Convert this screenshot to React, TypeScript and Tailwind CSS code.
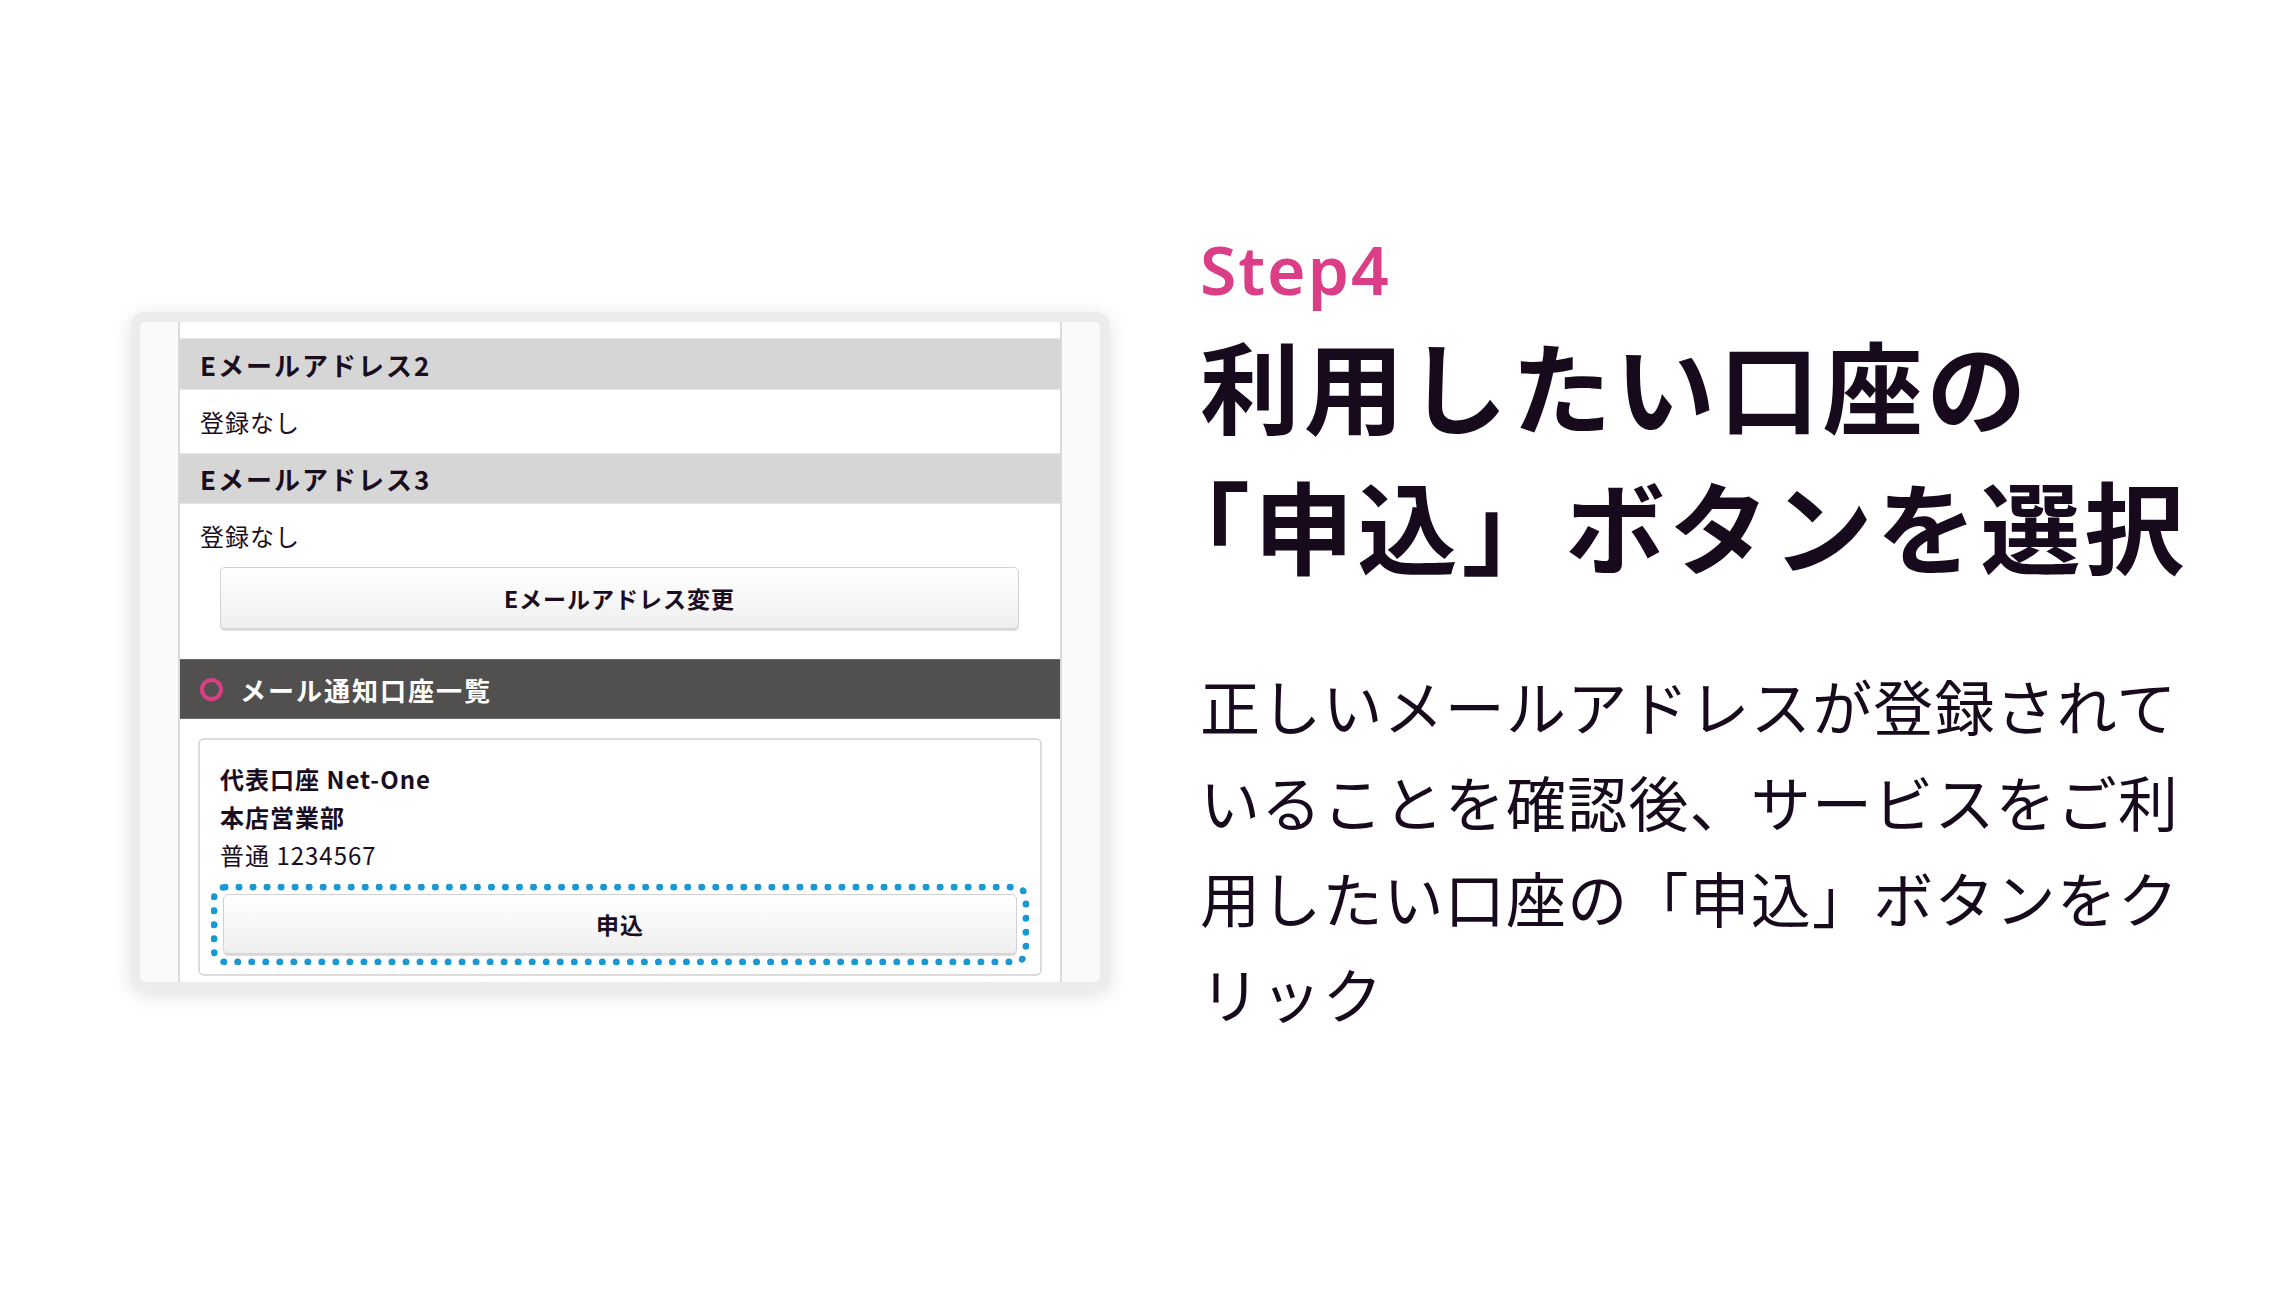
export default function App() {
  return (
    <div className="w-[2290px] h-[1304px] bg-white flex items-start pt-[236px] pl-[131px] overflow-hidden font-['Noto_Sans_CJK_JP','Noto_Sans',sans-serif] text-[#1a0d1f]">
      {/* Left: screenshot card */}
      <div className="mt-[76px] w-[979px] h-[679px] shrink-0 rounded-[14px] bg-[#ececec] pt-[10px] pl-[9px] pr-[10px] pb-[9px] shadow-[0_4px_20px_rgba(0,0,0,0.12)]">
        <div className="h-full rounded-[5px] bg-[#fafafa] px-[38px] overflow-hidden flex">
          <div className="flex-1 bg-white border-x-2 border-[#d9d9d9] flex flex-col overflow-hidden">
            <div className="h-[16px] shrink-0" />
            <div className="h-[52px] shrink-0 bg-[#d6d6d6] border-y border-[#e4e4e4] flex items-center pl-[20px] text-[26px] font-bold tracking-[2px]">
              Eメールアドレス2
            </div>
            <div className="h-[63px] shrink-0 flex items-center pl-[20px] text-[24px] tracking-[1px]">
              登録なし
            </div>
            <div className="h-[51px] shrink-0 bg-[#d6d6d6] border-y border-[#e4e4e4] flex items-center pl-[20px] text-[26px] font-bold tracking-[2px]">
              Eメールアドレス3
            </div>
            <div className="h-[63px] shrink-0 flex items-center pl-[20px] text-[24px] tracking-[1px]">
              登録なし
            </div>
            <div className="shrink-0 pl-[40px] pr-[41px]">
              <div className="h-[62px] rounded-[5px] border border-[#d2d2d2] bg-linear-to-b from-white to-[#efefef] shadow-[0_2px_0_#dcdcdc] flex items-center justify-center text-[23px] font-bold tracking-[1px]">
                Eメールアドレス変更
              </div>
            </div>
            <div className="h-[30px] shrink-0" />
            <div className="h-[60px] shrink-0 bg-[#52504f] border-y border-[#6a6868] flex items-center pl-[20px]">
              <div className="w-[23px] h-[23px] rounded-full border-[4px] border-[#db3d87] shrink-0" />
              <div className="ml-[17px] text-[26px] font-bold tracking-[2px] text-white">メール通知口座一覧</div>
            </div>
            <div className="shrink-0 px-[18px] pt-[19px]">
              <div className="rounded-[6px] border-2 border-[#dcdcdc] px-[11px] pt-[20px] pb-[9px]">
                <div className="pl-[9px] text-[24px] leading-[38px] tracking-[1px]">
                  <div className="font-bold">代表口座 Net-One</div>
                  <div className="font-bold">本店営業部</div>
                  <div>普通 1234567</div>
                </div>
                <div className="mt-[10px] rounded-[14px] border-[7px] border-dotted border-[#1a98d4] pt-[3px] pb-[4px] px-[5px]">
                  <div className="h-[60px] rounded-[5px] border border-[#d2d2d2] bg-linear-to-b from-white to-[#efefef] shadow-[0_2px_0_#dcdcdc] flex items-center justify-center text-[23px] font-bold tracking-[1px]">
                    申込
                  </div>
                </div>
              </div>
            </div>
          </div>
        </div>
      </div>

      {/* Right: text */}
      <div className="ml-[90px] w-[1060px] shrink-0 text-[#170a1c]">
        <div className="font-['Noto_Sans',sans-serif] text-[66px] leading-[66px] font-semibold tracking-[0.03em] text-[#db3d87]">
          Step4
        </div>
        <div className="mt-[12px] text-[100px] leading-[140px] font-bold tracking-[3.8px] [text-spacing-trim:trim-start] whitespace-nowrap">
          利用したい口座の
          <br />
          「申込」ボタンを選択
        </div>
        <div className="mt-[63px] text-[60px] leading-[96px] tracking-[1.2px] whitespace-nowrap">
          正しいメールアドレスが登録されて
          <br />
          いることを確認後、サービスをご利
          <br />
          用したい口座の「申込」ボタンをク
          <br />
          リック
        </div>
      </div>
    </div>
  );
}
